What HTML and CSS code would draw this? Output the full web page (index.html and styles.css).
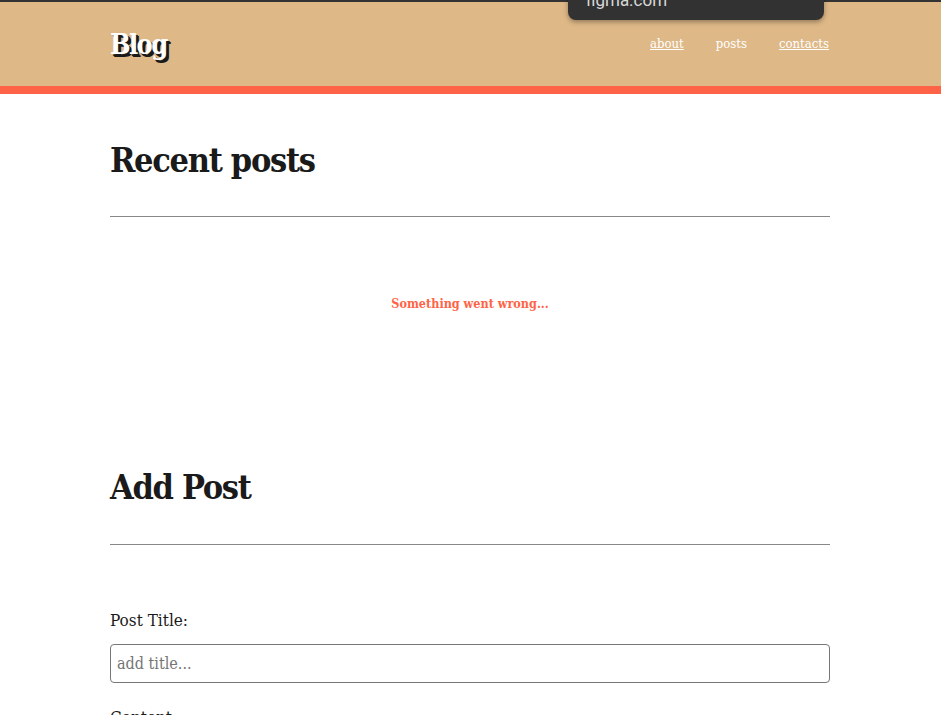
FILE: index.html
```html
<!DOCTYPE html>
<html lang="en">
<head>
<meta charset="utf-8">
<title>Blog</title>
<link rel="stylesheet" href="styles.css">
</head>
<body>
<div class="topline"></div>
<div class="tooltip">figma.com</div>
<header class="header">
  <div class="container header-inner">
    <div class="logo">Blog</div>
    <nav class="nav">
      <a class="nav-link underline" href="#">about</a>
      <a class="nav-link" href="#">posts</a>
      <a class="nav-link underline" href="#">contacts</a>
    </nav>
  </div>
</header>
<main class="container">
  <section class="posts">
    <h1 class="title">Recent posts</h1>
    <hr class="rule">
    <p class="error">Something went wrong...</p>
  </section>
  <section class="add">
    <h1 class="title">Add Post</h1>
    <hr class="rule">
    <label class="label" for="t">Post Title:</label>
    <input class="input" id="t" type="text" placeholder="add title...">
    <label class="label label-content" for="c">Content:</label>
  </section>
</main>
</body>
</html>
```
FILE: styles.css
```css
* { box-sizing: border-box; }
html, body { margin: 0; padding: 0; }
body {
  font-family: "DejaVu Serif", "Liberation Serif", serif;
  font-stretch: semi-condensed;
  color: #1a1a1a;
  background: #fff;
  overflow: hidden;
  height: 715px;
}
.topline { height: 2px; background: #333; }
.tooltip {
  position: absolute;
  left: 568px;
  top: -14px;
  width: 256px;
  height: 34px;
  background: #323232;
  color: #d8d8d8;
  border-radius: 0 0 8px 8px;
  box-shadow: 0 2px 5px rgba(0,0,0,0.35);
  font-family: "Roboto", "Noto Sans", sans-serif;
  font-stretch: normal;
  font-size: 17px;
  line-height: 20px;
  padding-left: 18px;
  padding-top: 4px;
  z-index: 10;
}
.container { width: 720px; margin: 0 110px; }
.header {
  background: #deb887;
  border-bottom: 8px solid #ff6347;
}
.header-inner {
  height: 84px;
  display: flex;
  align-items: center;
  justify-content: space-between;
}
.logo {
  color: #fff;
  font-weight: bold;
  font-size: 27px;
  text-shadow: 2px 2px 0 #1a1a1a, 3px 3px 0 #1a1a1a;
  letter-spacing: -1.6px;
  margin-top: 0;
}
.nav { display: flex; gap: 32px; margin-top: -2px; margin-right: 1px; }
.nav-link {
  color: #fff;
  font-size: 13px;
  text-decoration: none;
}
.nav-link.underline { text-decoration: underline; }
.title {
  font-size: 34px;
  line-height: 42px;
  font-weight: bold;
  letter-spacing: -1.3px;
  margin: 0;
  color: #1a1a1a;
}
.posts .title { margin-top: 45px; }
.rule {
  border: 0;
  border-top: 1px solid #888;
  margin: 35px 0 0;
  height: 0;
}
.add .rule { margin-top: 36px; }
.error {
  margin: 79px 0 0;
  text-align: center;
  color: #ff6347;
  font-weight: bold;
  font-size: 12.5px;
  line-height: 16px;
}
.add .title { margin-top: 154px; }
.label {
  display: block;
  font-size: 17px;
  line-height: 22px;
  margin-top: 64px;
}
.input {
  display: block;
  width: 720px;
  height: 39px;
  margin-top: 13px;
  border: 1px solid #777;
  border-radius: 4px;
  padding: 0 6px;
  font-family: inherit;
  font-stretch: semi-condensed;
  font-size: 16px;
  color: #333;
}
.input::placeholder { color: #757575; }
.label-content { margin-top: 23px; }
```
